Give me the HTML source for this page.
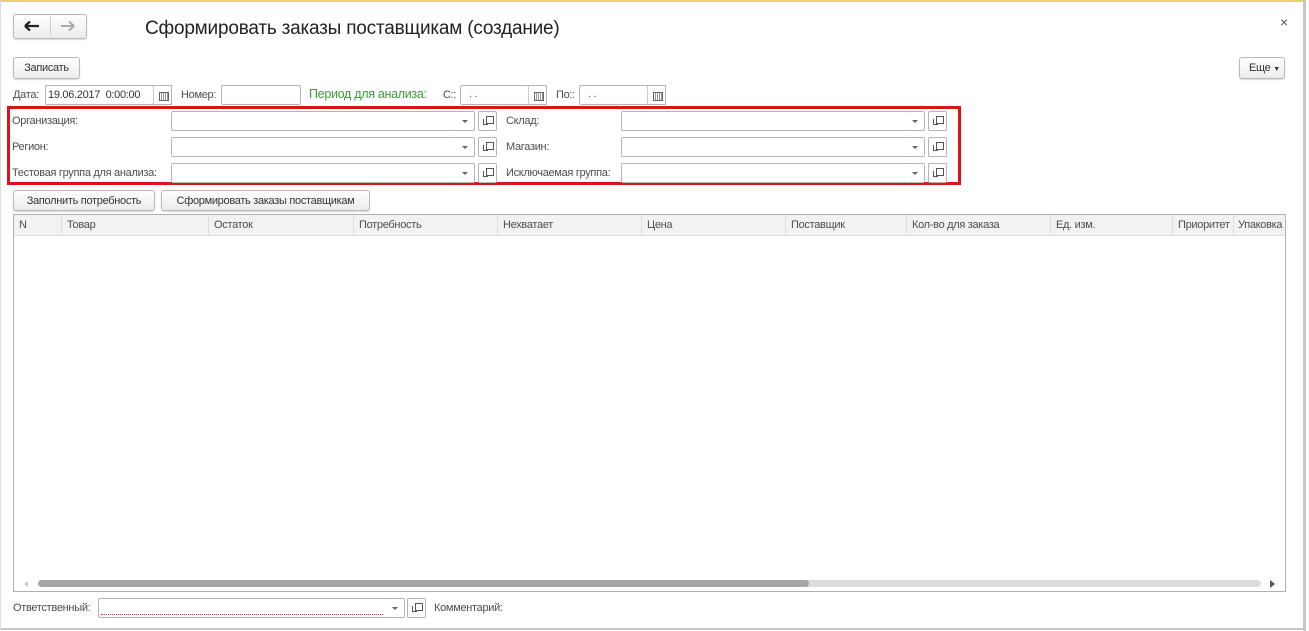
<!DOCTYPE html>
<html><head><meta charset="utf-8"><style>
*{box-sizing:border-box;margin:0;padding:0}
body{width:1309px;height:631px;background:#fff;position:relative;overflow:hidden;font-family:"Liberation Sans",Arial,sans-serif;font-size:11px;color:#4d4d4d;letter-spacing:-0.3px}
.a{position:absolute}
.btn{position:absolute;border:1px solid #b8b8b8;border-radius:3px;background:linear-gradient(#fff,#ececec);box-shadow:0 1px 1px rgba(0,0,0,.15);color:#333;text-align:center;line-height:21px}
.in{position:absolute;border:1px solid #b5b5b5;border-radius:2px;background:#fff;height:20px}
.lbl{position:absolute;line-height:14px;white-space:nowrap}
.dd{position:absolute;width:20px;height:20px;border:1px solid #b5b5b5;border-left:none;border-radius:0 2px 2px 0;background:#fff}
.dd:after{content:"";position:absolute;left:7px;top:8px;border:3px solid transparent;border-top:3px solid #666;border-bottom:none}
.op{position:absolute;width:19px;height:20px;border:1px solid #b5b5b5;border-radius:2px;background:#fff}
.op:before{content:"";position:absolute;left:7px;top:4px;width:6px;height:6px;border:1px solid #555}
.op:after{content:"";position:absolute;left:4px;top:7px;width:4px;height:5px;border-left:1px solid #555;border-bottom:1px solid #555}
.cal{position:absolute;width:19px;height:20px;border:1px solid #b5b5b5;border-left:1px solid #ccc;background:#fff}
.cal:after{content:"";position:absolute;left:5px;top:6px;width:8px;height:7px;border:1px solid #666;background:repeating-linear-gradient(90deg,#fff 0 1px,#999 1px 2px)}
.th{position:absolute;top:0;height:21px;line-height:21px;border-right:1px solid #ddd;padding-left:5px;white-space:nowrap;overflow:hidden}
</style></head><body>
<div class="a" style="left:0;top:0;width:1303px;height:2px;background:#e8d36a"></div>
<div class="a" style="left:1303px;top:0;width:3px;height:631px;background:#c8c8c8"></div>
<div class="a" style="left:0;top:628px;width:1303px;height:2px;background:#c8c8c8"></div>
<div class="a" style="left:0;top:0;width:1px;height:631px;background:#ddd"></div>

<div class="btn" style="left:13px;top:14px;width:74px;height:25px"></div>
<div class="a" style="left:50px;top:17px;width:1px;height:19px;background:#ccc"></div>
<svg class="a" style="left:24px;top:20px" width="16" height="12"><path d="M1 6H15M1 6L6 1.5M1 6L6 10.5" stroke="#222" stroke-width="2.2" fill="none"/></svg>
<svg class="a" style="left:60px;top:20px" width="16" height="12"><path d="M1 6H14M14 6L9 1.5M14 6L9 10.5" stroke="#aaa" stroke-width="2" fill="none"/></svg>
<div class="a" style="left:145px;top:18px;font-size:19px;color:#222;letter-spacing:-0.2px">Сформировать заказы поставщикам (создание)</div>
<div class="a" style="left:1280px;top:14px;font-size:14px;color:#555">×</div>

<div class="btn" style="left:13px;top:57px;width:67px;height:22px">Записать</div>
<div class="btn" style="left:1239px;top:57px;width:46px;height:22px;text-align:left;padding-left:9px">Еще <span style="font-size:7px">▼</span></div>

<div class="lbl" style="left:13px;top:88px">Дата:</div>
<div class="in" style="left:45px;top:85px;width:109px;color:#333;padding-left:2px;line-height:18px">19.06.2017&nbsp; 0:00:00</div>
<div class="cal" style="left:153px;top:85px"></div>
<div class="lbl" style="left:181px;top:88px">Номер:</div>
<div class="in" style="left:221px;top:85px;width:80px"></div>
<div class="lbl" style="left:309px;top:87px;color:#3c9a3c;font-size:12.5px">Период для анализа:</div>
<div class="lbl" style="left:443px;top:88px">С::</div>
<div class="in" style="left:460px;top:85px;width:69px;padding-left:8px;line-height:16px">. .</div>
<div class="cal" style="left:528px;top:85px"></div>
<div class="lbl" style="left:556px;top:88px">По::</div>
<div class="in" style="left:579px;top:85px;width:69px;padding-left:8px;line-height:16px">. .</div>
<div class="cal" style="left:647px;top:85px"></div>

<div class="a" style="left:7px;top:106px;width:954px;height:79px;border:3px solid #d9141a"></div>
<div class="lbl" style="left:12px;top:114px">Организация:</div>
<div class="lbl" style="left:12px;top:140px">Регион:</div>
<div class="lbl" style="left:12px;top:166px">Тестовая группа для анализа:</div>
<div class="in" style="left:171px;top:111px;width:285px"></div><div class="dd" style="left:455px;top:111px"></div><div class="op" style="left:478px;top:111px"></div>
<div class="in" style="left:171px;top:137px;width:285px"></div><div class="dd" style="left:455px;top:137px"></div><div class="op" style="left:478px;top:137px"></div>
<div class="in" style="left:171px;top:163px;width:285px"></div><div class="dd" style="left:455px;top:163px"></div><div class="op" style="left:478px;top:163px"></div>
<div class="lbl" style="left:506px;top:114px">Склад:</div>
<div class="lbl" style="left:506px;top:140px">Магазин:</div>
<div class="lbl" style="left:506px;top:166px">Исключаемая группа:</div>
<div class="in" style="left:621px;top:111px;width:285px"></div><div class="dd" style="left:905px;top:111px"></div><div class="op" style="left:928px;top:111px"></div>
<div class="in" style="left:621px;top:137px;width:285px"></div><div class="dd" style="left:905px;top:137px"></div><div class="op" style="left:928px;top:137px"></div>
<div class="in" style="left:621px;top:163px;width:285px"></div><div class="dd" style="left:905px;top:163px"></div><div class="op" style="left:928px;top:163px"></div>

<div class="btn" style="left:13px;top:190px;width:142px;height:21px;line-height:20px">Заполнить потребность</div>
<div class="btn" style="left:161px;top:190px;width:209px;height:21px;line-height:20px">Сформировать заказы поставщикам</div>

<div class="a" style="left:13px;top:214px;width:1273px;height:378px;border:1px solid #b0b0b0;overflow:hidden">
 <div class="a" style="left:0;top:0;width:1273px;height:21px;background:#f2f2f2;border-bottom:1px solid #ddd">
  <div class="th" style="left:0;width:48px">N</div>
  <div class="th" style="left:48px;width:147px">Товар</div>
  <div class="th" style="left:195px;width:145px">Остаток</div>
  <div class="th" style="left:340px;width:144px">Потребность</div>
  <div class="th" style="left:484px;width:144px">Нехватает</div>
  <div class="th" style="left:628px;width:144px">Цена</div>
  <div class="th" style="left:772px;width:121px">Поставщик</div>
  <div class="th" style="left:893px;width:144px">Кол-во для заказа</div>
  <div class="th" style="left:1037px;width:122px">Ед. изм.</div>
  <div class="th" style="left:1159px;width:61px">Приоритет</div>
  <div class="th" style="left:1220px;width:60px;padding-left:4px">Упаковка</div>
 </div>
 <div class="a" style="left:24px;top:365px;width:1223px;height:7px;border-radius:4px;background:#dcdcdc"></div>
 <div class="a" style="left:24px;top:365px;width:771px;height:7px;border-radius:4px;background:#a5a5a5"></div>
 <div class="a" style="left:10px;top:366px;border:3px solid transparent;border-right:4px solid #ccc;border-left:none"></div>
 <div class="a" style="left:1256px;top:365px;border:4px solid transparent;border-left:5px solid #555;border-right:none"></div>
</div>

<div class="lbl" style="left:13px;top:601px">Ответственный:</div>
<div class="in" style="left:98px;top:598px;width:288px"><div class="a" style="left:2px;bottom:2px;right:2px;border-bottom:1px dotted #c33"></div></div>
<div class="dd" style="left:385px;top:598px"></div><div class="op" style="left:407px;top:598px"></div>
<div class="lbl" style="left:434px;top:601px">Комментарий:</div>
</body></html>
